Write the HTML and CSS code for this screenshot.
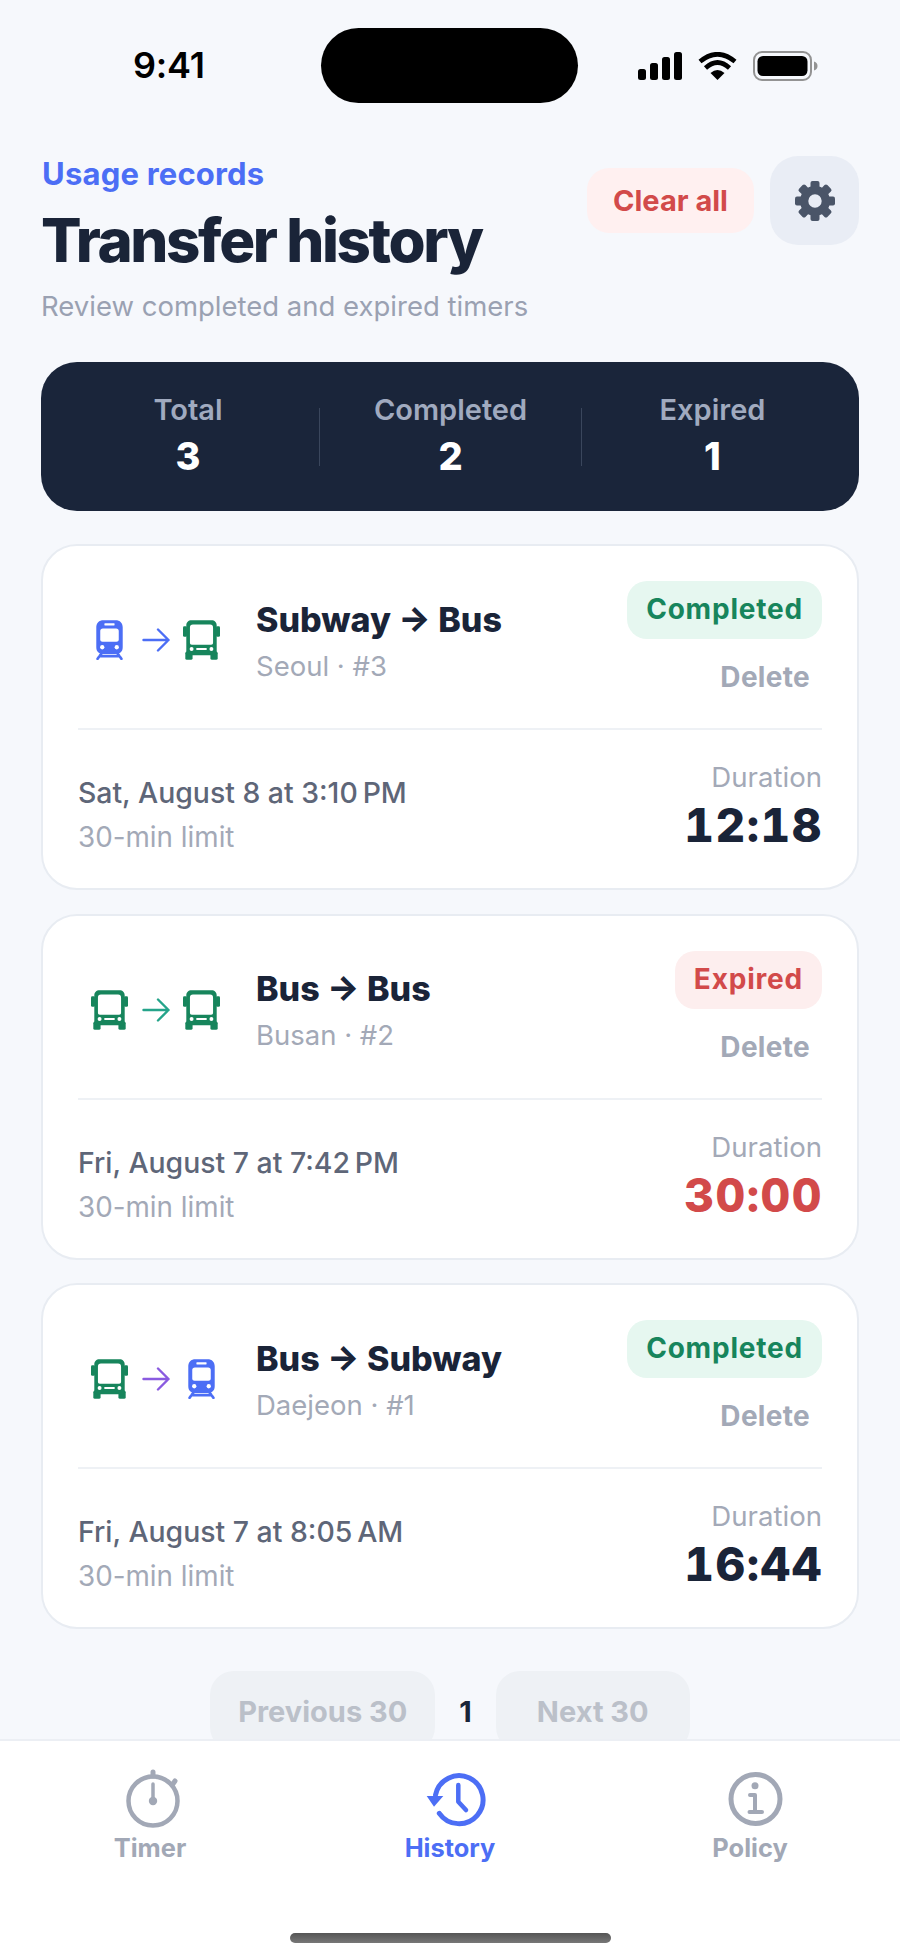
FILE: index.html
```html
<!DOCTYPE html>
<html lang="en">
<head>
<meta charset="utf-8">
<title>Transfer history</title>
<link rel="stylesheet" href="styles.css">
</head>
<body>
<svg class="defs" width="0" height="0" aria-hidden="true">
  <defs>
    <symbol id="bus" viewBox="0 0 112 120">
      <rect x="0" y="18" width="12" height="32" rx="4" fill="currentColor"/>
      <rect x="100" y="18" width="12" height="32" rx="4" fill="currentColor"/>
      <rect x="7" y="95" width="22" height="25" rx="5" fill="currentColor"/>
      <rect x="83" y="95" width="22" height="25" rx="5" fill="currentColor"/>
      <path fill="currentColor" fill-rule="evenodd" d="M26 0H86C96 0 102 6 102 16V97C102 103 99 106 94 106H18C13 106 10 103 10 97V16C10 6 16 0 26 0ZM30 13C24 13 21 16 21 22V68C21 72 23 74 27 74H85C89 74 91 72 91 68V22C91 16 88 13 82 13Z"/>
      <circle cx="26" cy="87" r="6" fill="#fff"/>
      <circle cx="86" cy="87" r="6" fill="#fff"/>
      <rect x="40" y="84" width="32" height="6" rx="2" fill="#fff"/>
    </symbol>
    <symbol id="train" viewBox="0 0 112 120">
      <path fill="none" stroke="currentColor" stroke-width="8" stroke-linecap="round" d="M32 100L20 117M80 100L92 117M26 109H86"/>
      <path fill="currentColor" fill-rule="evenodd" d="M38 0H74C88 0 96 8 96 22V82C96 96 88 102 74 102H38C24 102 16 96 16 82V22C16 8 24 0 38 0ZM42 9C40 9 40 16 42 16H70C72 16 72 9 70 9ZM36 25C31 25 28 28 28 33V59C28 63 31 65 35 65H77C81 65 84 63 84 59V33C84 28 81 25 76 25Z"/>
      <circle cx="34" cy="82" r="6.5" fill="#fff"/>
      <circle cx="78" cy="82" r="6.5" fill="#fff"/>
    </symbol>
    <symbol id="arrow" viewBox="0 0 28 24">
      <path fill="none" stroke="currentColor" stroke-width="2.4" stroke-linecap="round" stroke-linejoin="round" d="M1.5 12H26.5M16 1.5L26.5 12L16 22.5"/>
    </symbol>
  </defs>
</svg>

<header class="statusbar">
  <span class="clock">9:41</span>
  <span class="island"></span>
  <span class="status-icons">
    <svg class="signal" width="45" height="28" viewBox="0 0 45 28"><rect x="0" y="17" width="8" height="11" rx="2.5"/><rect x="12" y="11" width="8" height="17" rx="2.5"/><rect x="24" y="5" width="8" height="23" rx="2.5"/><rect x="36" y="0" width="8" height="28" rx="2.5"/></svg>
    <svg class="wifi" width="39" height="28" viewBox="0 0 39 28"><path fill="none" stroke="#000" stroke-width="4.6" d="M2 9.5Q19.5 -5 37 9.5M7.5 16Q19.5 5 31.5 16"/><path d="M12.5 21Q19.5 15 26.5 21L19.5 28Z"/></svg>
    <svg class="battery" width="65" height="30" viewBox="0 0 65 30"><rect x="1" y="1" width="57" height="28" rx="8" fill="none" stroke="#939393" stroke-width="2"/><rect x="4.5" y="5" width="50" height="20" rx="5.5"/><path d="M61 10.5C63.500 11 64.500 13 64.500 15S63.500 19 61 19.500Z" fill="#939393"/></svg>
  </span>
</header>

<main class="content">
  <section class="page-head">
    <div class="heading">
      <p class="eyebrow">Usage records</p>
      <h1 class="title">Transfer history</h1>
      <p class="subtitle">Review completed and expired timers</p>
    </div>
    <div class="head-actions">
      <button class="clear-btn" type="button">Clear all</button>
      <button class="gear-btn" type="button" aria-label="Settings">
        <svg width="40" height="40" viewBox="-20 -20 40 40" fill="#4a5568">
          <path fill-rule="evenodd" d="M0 -15A15 15 0 1 1 0 15A15 15 0 1 1 0 -15ZM0 -6.700A6.700 6.700 0 1 0 0 6.700A6.700 6.700 0 1 0 0 -6.700Z"/>
          <rect x="-4.500" y="-20" width="9" height="8" rx="2"/>
          <rect x="-4.500" y="-20" width="9" height="8" rx="2" transform="rotate(45)"/>
          <rect x="-4.500" y="-20" width="9" height="8" rx="2" transform="rotate(90)"/>
          <rect x="-4.500" y="-20" width="9" height="8" rx="2" transform="rotate(135)"/>
          <rect x="-4.500" y="-20" width="9" height="8" rx="2" transform="rotate(180)"/>
          <rect x="-4.500" y="-20" width="9" height="8" rx="2" transform="rotate(225)"/>
          <rect x="-4.500" y="-20" width="9" height="8" rx="2" transform="rotate(270)"/>
          <rect x="-4.500" y="-20" width="9" height="8" rx="2" transform="rotate(315)"/>
        </svg>
      </button>
    </div>
  </section>

  <section class="stats">
    <div class="stat"><span class="stat-label">Total</span><span class="stat-value">3</span></div>
    <div class="stat"><span class="stat-label">Completed</span><span class="stat-value">2</span></div>
    <div class="stat"><span class="stat-label">Expired</span><span class="stat-value">1</span></div>
  </section>

  <section class="cards">
    <article class="card">
      <div class="card-top">
        <div class="route">
          <svg class="mode mode-subway"><use href="#train"/></svg>
          <svg class="route-arrow arrow-blue"><use href="#arrow"/></svg>
          <svg class="mode mode-bus"><use href="#bus"/></svg>
        </div>
        <div class="trip">
          <h2 class="trip-title">Subway → Bus</h2>
          <p class="trip-meta">Seoul · #3</p>
        </div>
        <div class="trip-side">
          <span class="badge badge-done">Completed</span>
          <button class="delete-btn" type="button">Delete</button>
        </div>
      </div>
      <div class="card-bottom">
        <div>
          <p class="when">Sat, August 8 at 3:10&#8239;PM</p>
          <p class="limit">30-min limit</p>
        </div>
        <div class="duration">
          <p class="duration-label">Duration</p>
          <p class="duration-value">12:18</p>
        </div>
      </div>
    </article>

    <article class="card">
      <div class="card-top">
        <div class="route">
          <svg class="mode mode-bus"><use href="#bus"/></svg>
          <svg class="route-arrow arrow-teal"><use href="#arrow"/></svg>
          <svg class="mode mode-bus"><use href="#bus"/></svg>
        </div>
        <div class="trip">
          <h2 class="trip-title">Bus → Bus</h2>
          <p class="trip-meta">Busan · #2</p>
        </div>
        <div class="trip-side">
          <span class="badge badge-expired">Expired</span>
          <button class="delete-btn" type="button">Delete</button>
        </div>
      </div>
      <div class="card-bottom">
        <div>
          <p class="when">Fri, August 7 at 7:42&#8239;PM</p>
          <p class="limit">30-min limit</p>
        </div>
        <div class="duration">
          <p class="duration-label">Duration</p>
          <p class="duration-value duration-over">30:00</p>
        </div>
      </div>
    </article>

    <article class="card">
      <div class="card-top">
        <div class="route">
          <svg class="mode mode-bus"><use href="#bus"/></svg>
          <svg class="route-arrow arrow-purple"><use href="#arrow"/></svg>
          <svg class="mode mode-subway"><use href="#train"/></svg>
        </div>
        <div class="trip">
          <h2 class="trip-title">Bus → Subway</h2>
          <p class="trip-meta">Daejeon · #1</p>
        </div>
        <div class="trip-side">
          <span class="badge badge-done">Completed</span>
          <button class="delete-btn" type="button">Delete</button>
        </div>
      </div>
      <div class="card-bottom">
        <div>
          <p class="when">Fri, August 7 at 8:05&#8239;AM</p>
          <p class="limit">30-min limit</p>
        </div>
        <div class="duration">
          <p class="duration-label">Duration</p>
          <p class="duration-value">16:44</p>
        </div>
      </div>
    </article>
  </section>

  <nav class="pager">
    <button class="page-btn page-prev" type="button">Previous 30</button>
    <span class="page-num">1</span>
    <button class="page-btn page-next" type="button">Next 30</button>
  </nav>
</main>

<footer class="tabbar">
  <div class="tabs">
    <a class="tab">
      <svg class="tab-icon" viewBox="0 0 64 64" fill="none" stroke="currentColor">
        <circle cx="35" cy="33" r="24.500" stroke-width="4.500"/>
        <path stroke-width="5" stroke-linecap="round" d="M35 4V8M54.500 16.500L57 13"/>
        <path stroke-width="3.500" stroke-linecap="round" d="M35 16V33"/>
        <circle cx="35" cy="33" r="4.200" fill="currentColor" stroke="none"/>
      </svg>
      <span class="tab-label">Timer</span>
    </a>
    <a class="tab tab-active">
      <svg class="tab-icon" viewBox="0 0 64 64" fill="none" stroke="currentColor">
        <path stroke-width="5" stroke-linecap="round" d="M21.300 45.300A24 24 0 1 0 17.500 27"/>
        <path fill="currentColor" stroke="none" d="M8.700 28H25.300L16 38.700Z"/>
        <path stroke-width="4.500" stroke-linecap="round" stroke-linejoin="round" d="M40.300 17V33.700L48 42"/>
      </svg>
      <span class="tab-label">History</span>
    </a>
    <a class="tab">
      <svg class="tab-icon" viewBox="0 0 64 64" fill="none" stroke="currentColor">
        <circle cx="37.500" cy="31" r="24.500" stroke-width="5"/>
        <circle cx="37" cy="17.700" r="3.500" fill="currentColor" stroke="none"/>
        <path stroke-width="4" stroke-linecap="round" stroke-linejoin="round" d="M32 27H37V44M31.500 44H44"/>
      </svg>
      <span class="tab-label">Policy</span>
    </a>
  </div>
  <div class="home-bar"></div>
</footer>
</body>
</html>
```

FILE: styles.css
```css
* { box-sizing: border-box; }

html, body { margin: 0; padding: 0; }

body {
  width: 900px;
  height: 1956px;
  display: flex;
  flex-direction: column;
  overflow: hidden;
  background: #f6f8fc;
  color: #1a2438;
  font-family: Inter, "Liberation Sans", sans-serif;
}

p, h1, h2 { margin: 0; }

button {
  border: 0;
  font-family: inherit;
  background: none;
  padding: 0;
}

.defs { position: absolute; }

/* status bar */
.statusbar {
  flex: none;
  height: 103px;
  padding: 28px 0 0 133px;
  display: flex;
  align-items: center;
}

.clock {
  width: 188px;
  font-size: 36px;
  line-height: 75px;
  font-weight: 600;
  color: #000;
  letter-spacing: -0.2px;
}

.island {
  width: 257px;
  height: 75px;
  border-radius: 38px;
  background: #000;
}

.status-icons {
  margin-left: 60px;
  display: flex;
  align-items: center;
}

.signal { margin-right: 15px; }
.wifi { margin-right: 16px; }

/* main area */
.content {
  flex: 1;
  min-height: 0;
  overflow: hidden;
  padding: 53px 41px 0;
}

.page-head {
  display: flex;
  justify-content: space-between;
  align-items: flex-start;
}

.eyebrow {
  font-size: 31px;
  line-height: 36px;
  font-weight: 700;
  letter-spacing: 0.2px;
  color: #4c6ef5;
  padding-left: 1px;
}

.title {
  font-size: 60px;
  line-height: 72px;
  font-weight: 800;
  letter-spacing: -2.4px;
  color: #1a2438;
  margin-top: 12px;
}

.subtitle {
  font-size: 27.500px;
  line-height: 34px;
  color: #9aa1b2;
  margin-top: 13px;
}

.head-actions {
  display: flex;
  align-items: center;
  gap: 16px;
}

.clear-btn {
  width: 167px;
  height: 65px;
  border-radius: 22px;
  background: #fff0f0;
  color: #d24a4a;
  font-size: 29px;
  font-weight: 700;
}

.gear-btn {
  width: 89px;
  height: 89px;
  border-radius: 28px;
  background: #e9edf5;
  display: flex;
  align-items: center;
  justify-content: center;
}

/* summary */
.stats {
  margin-top: 39px;
  height: 149px;
  padding: 0 16px;
  border-radius: 36px;
  background: #1a253a;
  display: grid;
  grid-template-columns: repeat(3, 1fr);
  align-items: center;
}

.stat {
  height: 58px;
  display: flex;
  flex-direction: column;
  align-items: center;
  border-left: 1px solid #3a465c;
}

.stat:first-child { border-left: 0; }

.stat-label {
  font-size: 29px;
  line-height: 34px;
  font-weight: 600;
  color: #a0aabf;
  margin-top: -15px;
}

.stat-value {
  font-size: 38px;
  line-height: 46px;
  font-weight: 800;
  color: #fff;
  margin-top: 6px;
}

/* cards */
.cards {
  margin-top: 33px;
  display: flex;
  flex-direction: column;
  gap: 23.500px;
}

.card {
  height: 346px;
  padding: 35px 35px 0;
  border: 2px solid #e8ecf2;
  border-radius: 36px;
  background: #fff;
}

.card-top {
  height: 149px;
  padding-bottom: 29px;
  display: flex;
  align-items: center;
  border-bottom: 2px solid #eef1f5;
}

.route {
  margin-left: 13px;
  width: 129px;
  display: flex;
  align-items: center;
}

.mode {
  width: 37px;
  height: 40px;
  flex: none;
}

.mode-bus { color: #17855c; }
.mode-subway { color: #4c6ef5; }

.route-arrow {
  width: 28px;
  height: 24px;
  margin: 0 13px 0 14px;
  flex: none;
}

.arrow-blue { color: #4c6ef5; }
.arrow-teal { color: #25a48a; }
.arrow-purple { color: #8a5be0; }

.trip {
  margin-left: 36px;
  flex: 1;
}

.trip-title {
  font-size: 34px;
  line-height: 44px;
  font-weight: 800;
  letter-spacing: 0;
  color: #1a2438;
}

.trip-meta {
  font-size: 27.500px;
  line-height: 34px;
  margin-top: 7px;
  color: #a3a9b7;
}

.trip-side {
  align-self: flex-start;
  display: flex;
  flex-direction: column;
  align-items: flex-end;
}

.badge {
  height: 58px;
  padding: 0 19px;
  border-radius: 20px;
  font-size: 28px;
  font-weight: 700;
  letter-spacing: 0.8px;
  line-height: 57px;
}

.badge-done { background: #e6f7f0; color: #17855c; }
.badge-expired { background: #fdeeee; color: #d24a4a; }

.delete-btn {
  margin-top: 20px;
  padding-right: 12px;
  font-size: 28px;
  letter-spacing: 0.3px;
  line-height: 36px;
  font-weight: 700;
  color: #a3a9b7;
}

.card-bottom {
  padding-top: 27px;
  display: flex;
  justify-content: space-between;
  align-items: flex-start;
}

.when {
  margin-top: 18px;
  font-size: 28.400px;
  line-height: 36px;
  font-weight: 550;
  color: #5e6678;
}

.limit {
  margin-top: 8px;
  font-size: 27.800px;
  line-height: 36px;
  color: #a3a9b7;
}

.duration {
  text-align: right;
}

.duration-label {
  margin-top: 3px;
  font-size: 27.600px;
  line-height: 34px;
  color: #a3a9b7;
}

.duration-value {
  margin-top: 2px;
  margin-right: -1px;
  font-size: 46px;
  line-height: 58px;
  font-weight: 800;
  font-variant-numeric: tabular-nums;
  letter-spacing: 1.5px;
  color: #1a2438;
}

.duration-over { color: #d24a4a; }

/* pager */
.pager {
  margin-top: 42px;
  display: flex;
  justify-content: center;
  align-items: center;
  gap: 24px;
}

.page-btn {
  height: 80px;
  border-radius: 24px;
  background: #eef1f5;
  color: #bbc0c9;
  font-size: 29px;
  font-weight: 700;
}

.page-prev { width: 225px; }
.page-next { width: 194px; }

.page-num {
  font-size: 29px;
  font-weight: 700;
  color: #1a2438;
}

/* tab bar */
.tabbar {
  flex: none;
  height: 217px;
  position: relative;
  border-top: 2px solid #eceff4;
  background: #fff;
  display: flex;
  flex-direction: column;
  align-items: center;
}

.tabs {
  width: 100%;
  padding-top: 27px;
  display: grid;
  grid-template-columns: repeat(3, 1fr);
}

.tab {
  display: flex;
  flex-direction: column;
  align-items: center;
  color: #a2a8b6;
}

.tab-active { color: #4c6ef5; }

.tab-icon {
  width: 64px;
  height: 64px;
  overflow: visible;
}

.tab-label {
  font-size: 25.400px;
  line-height: 32px;
  font-weight: 700;
  margin-top: 0;
}

.home-bar {
  width: 321px;
  height: 10px;
  margin-top: 69px;
  border-radius: 5px;
  background: linear-gradient(#555, #777);
}
```
